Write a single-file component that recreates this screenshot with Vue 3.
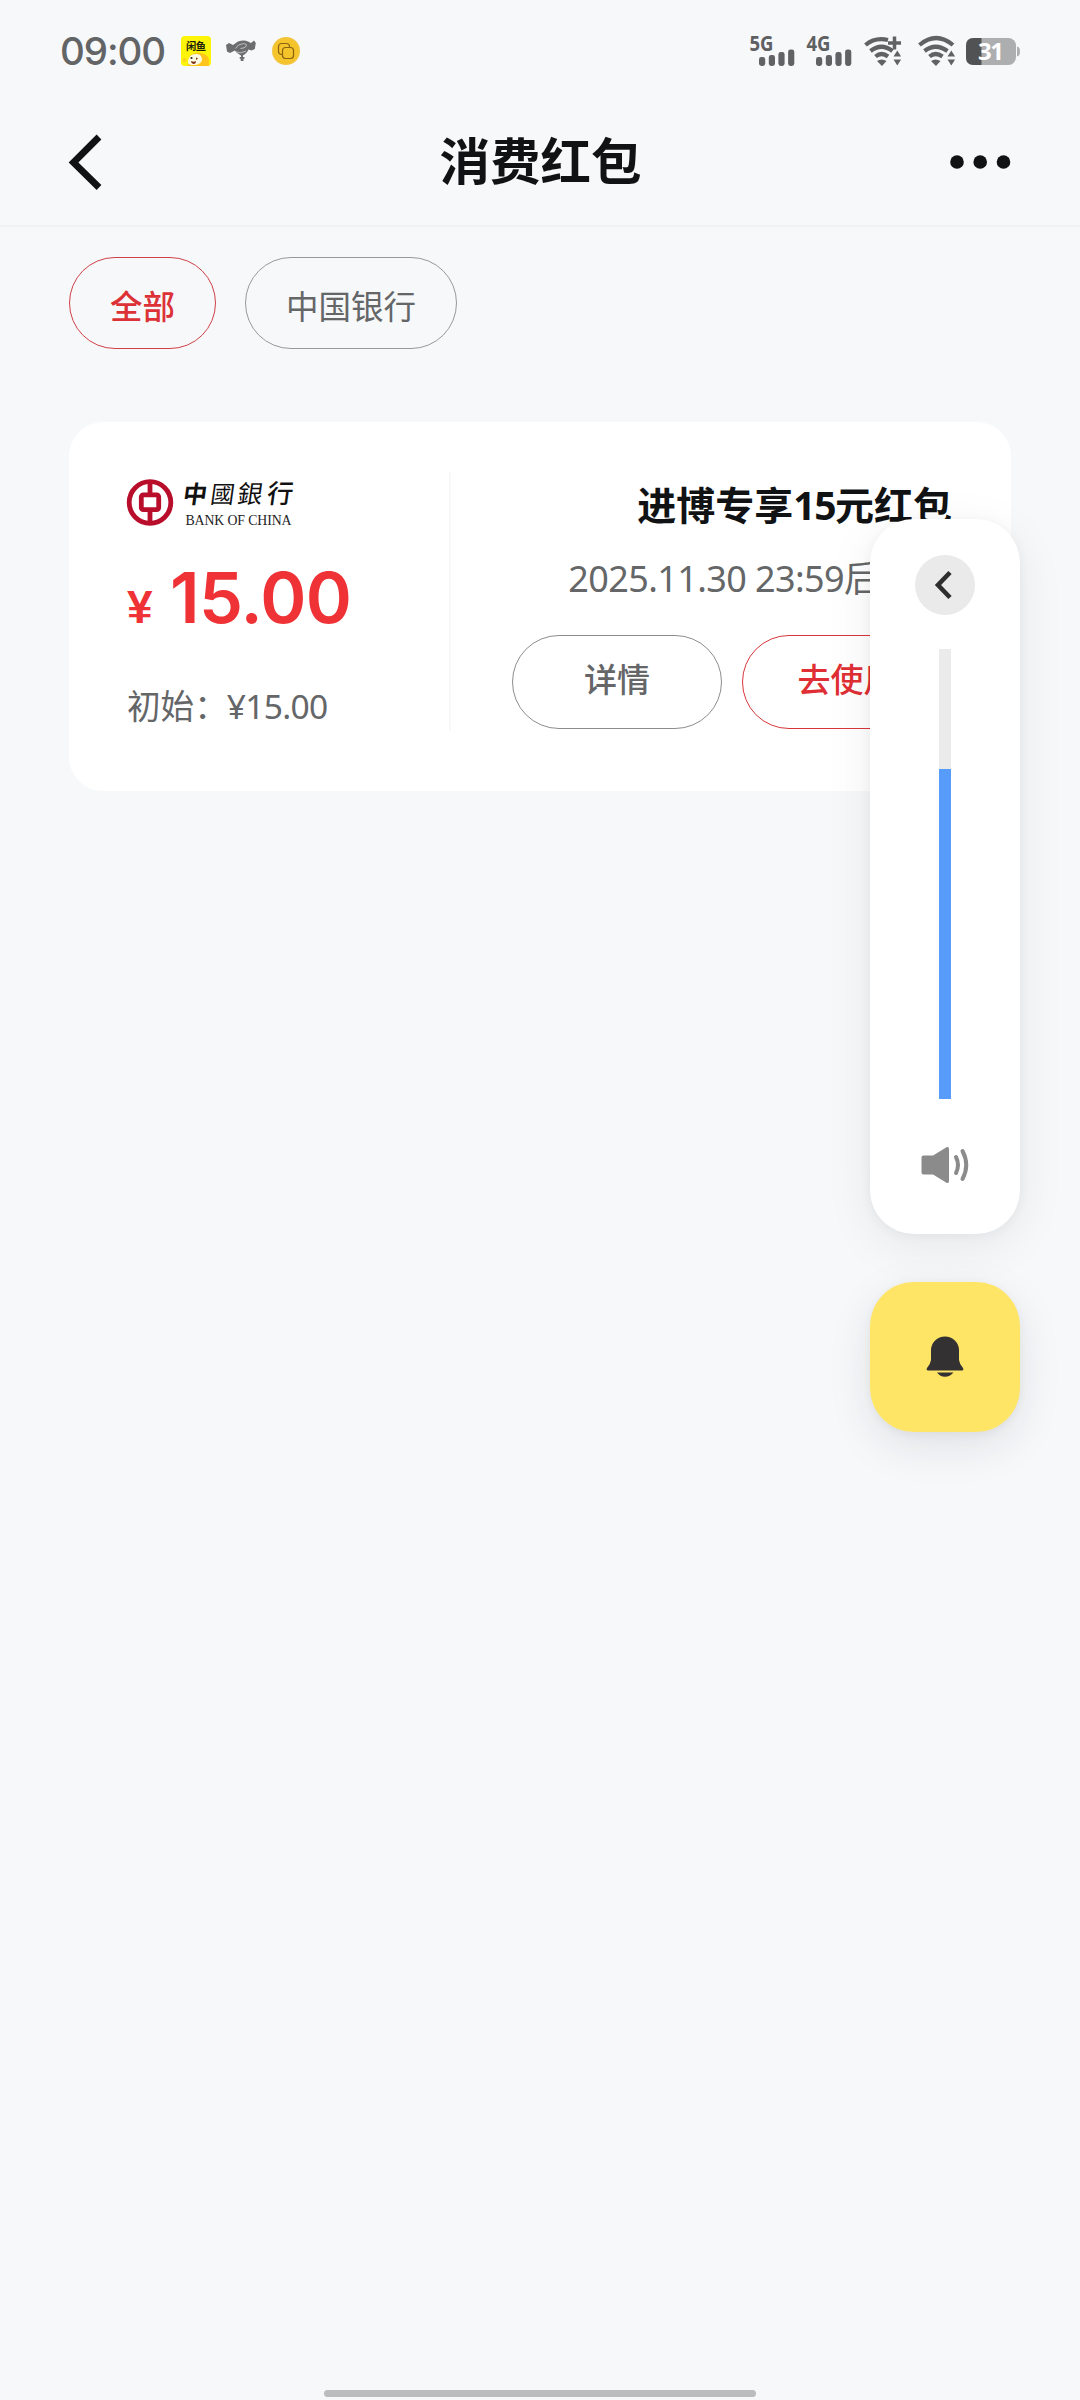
<script setup>
import { ref } from 'vue'

const chips = ref([
  { label: '全部', active: true },
  { label: '中国银行', active: false },
])
const volume = ref(73.33)
const bars = [
  { x: 9, h: 9 },
  { x: 18.8, h: 11 },
  { x: 28.4, h: 14 },
  { x: 38.1, h: 16.5 },
]
const networks = ['5G', '4G']
</script>

<template>
  <div class="screen">
    <div class="status">
      <span class="clock">09:00</span>
      <svg class="app-icon" width="30" height="30" viewBox="0 0 30 30">
        <rect width="30" height="30" rx="3.500" fill="#fdf509" />
        <path d="M7 30c-1-8 2-12 7-13 6-1 13 1 14 7v6z" fill="#ffc51b" />
        <path d="M7 27c0-6 3-9 8-9 4 0 6 2 6 6-1 4-5 5-8 5-3 0-5 0-6-2z" fill="#fffbe0" />
        <circle cx="3.500" cy="24" r="2" fill="#ffd21f" />
        <circle cx="10.500" cy="22" r="1.100" fill="#222" />
        <path d="M15 24l2-1.500-2-1M10 25q3 1.500 5 0 0 3-2.500 3-2.500-.5-2.500-3z" fill="#7a2a12" />
        <text x="5" y="13.500" font-size="10.300" font-weight="700" fill="#20200a" textLength="20">闲鱼</text>
      </svg>
      <svg class="bird-icon" width="30" height="22" viewBox="0 0 30 22">
        <path d="M0 5l3-2 4 2 5-3.500Q18-.3 22 1.500L25 3l3-2.500L29.800 3l-1 6-3.300 1.500-3-1q-1 3-4 5l-1.500.8L17 17h1.500v1.800h-1V21h-2.800v-2.200h-1V17h1.500l-.3-1.500q-4-2-6-5L4 13 1 11.500z" fill="#6b6d6f" />
        <path d="M9.500 8.500q2-4.500 8-5 4 .5 3 2.500-2 2.500-6 2.500M10 12q5 2 10-1" fill="none" stroke="#c4c6c8" stroke-width=".9" />
      </svg>
      <svg class="coin-icon" width="28" height="28" viewBox="0 0 28 28">
        <circle cx="14" cy="14" r="14" fill="#f2c53d" />
        <circle cx="14" cy="14" r="12.300" fill="#f5c42b" />
        <rect x="6.500" y="6.500" width="11" height="11" rx="3" fill="none" stroke="#8a6212" stroke-width="1.200" />
        <rect x="10.500" y="10.500" width="11" height="11" rx="3" fill="#f5c42b" stroke="#8a6212" stroke-width="1.200" />
      </svg>
      <div class="status-right">
        <svg v-for="n in networks" :key="n" class="signal" width="45" height="32" viewBox="0 0 45 32">
          <text x="-.5" y="16" font-size="20.500" font-weight="700" fill="#5e6062" textLength="24" lengthAdjust="spacingAndGlyphs">{{ n }}</text>
          <rect v-for="b in bars" :key="b.x" :x="b.x" :y="31 - b.h" width="6.200" :height="b.h" rx="2.400" fill="#606264" />
        </svg>
        <svg class="wifi" width="38" height="32" viewBox="0 0 38 32">
          <g fill="none" stroke="#606264" stroke-width="4.200">
            <path d="M1.500 10Q11 2 24 5" />
            <path d="M6.500 16Q17.500 7.500 28.500 16" />
            <path d="M11.500 21.500Q17.500 16.500 24 21.500" />
            <path d="M30.500 1.500v13M24 8h13" stroke-width="3.500" />
          </g>
          <path d="M13 26q4.500-3 9.500 0L18 31z M29.500 21.500l3.800-6 3.800 6z M29.500 24.500l3.800 6 3.800-6z" fill="#606264" />
        </svg>
        <svg class="wifi second" width="38" height="32" viewBox="0 0 38 32">
          <g fill="none" stroke="#606264" stroke-width="4.200">
            <path d="M1.500 10Q18-4 35 10" />
            <path d="M6.500 16Q17.500 7.500 29.500 16" />
            <path d="M11.500 21.500Q17.500 16.500 24.500 21.500" />
          </g>
          <path d="M13 26q4.500-3 9.500 0L18 31z M29.500 21.500l3.800-6 3.800 6z M29.500 24.500l3.800 6 3.800-6z" fill="#606264" />
        </svg>
        <svg class="battery" width="54" height="27" viewBox="0 0 54 27">
          <rect width="50" height="27" rx="7.500" fill="#acaeb0" />
          <path d="M51 8.500q3 .5 3 5t-3 5z" fill="#acaeb0" />
          <path d="M7.500 0H15.500V27H7.500Q0 27 0 19.500V7.500Q0 0 7.500 0z" fill="#505254" />
          <text x="12" y="22" font-size="24" font-weight="700" fill="#fff" textLength="26">31</text>
        </svg>
      </div>
    </div>

    <header class="nav">
      <svg width="34" height="56" viewBox="0 0 34 56">
        <path d="M31 3L5.500 28.500l25.500 25" fill="none" stroke="#111214" stroke-width="6.800" />
      </svg>
      <h1>消费红包</h1>
      <svg width="62" height="14" viewBox="0 0 62 14">
        <circle cx="8" cy="7" r="6.800" fill="#111214" />
        <circle cx="31.200" cy="7" r="6.800" fill="#111214" />
        <circle cx="54.500" cy="7" r="6.800" fill="#111214" />
      </svg>
    </header>

    <div class="chips">
      <div v-for="c in chips" :key="c.label" class="chip" :class="{ active: c.active }">{{ c.label }}</div>
    </div>

    <section class="card">
      <div class="left">
        <svg class="logo" width="170" height="48" viewBox="0 0 170 48">
          <circle cx="23" cy="24.500" r="20.800" fill="none" stroke="#b90e2b" stroke-width="4.800" />
          <path d="M23 3v12M23 34v12" stroke="#b90e2b" stroke-width="4.800" />
          <rect x="14.300" y="16.800" width="17.400" height="14.800" rx="2" fill="none" stroke="#b90e2b" stroke-width="4.800" />
          <g class="brush" fill="#111" transform="skewX(-8)">
            <text x="58.500" y="25" font-weight="700" font-size="24">中</text>
            <text x="86" y="24.500" font-size="24">國</text>
            <text x="113" y="25" font-size="25">銀</text>
            <text x="142.500" y="25" font-size="26" font-weight="500">行</text>
          </g>
          <text class="latin" x="58.500" y="47" font-size="13.800" fill="#222" textLength="106">BANK OF CHINA</text>
        </svg>
        <div class="price"><span class="yen">¥</span><span class="amount">15.00</span></div>
        <div class="initial">初始：<span>¥15.00</span></div>
      </div>
      <div class="right">
        <div class="name">进博专享<span>15</span>元红包</div>
        <div class="expiry"><span>2025.11.30 23:59</span>后过期</div>
        <div class="actions">
          <div class="btn">详情</div>
          <div class="btn primary">去使用</div>
        </div>
      </div>
    </section>

    <div class="volume">
      <div class="toggle">
        <svg width="20" height="30" viewBox="0 0 20 30">
          <path d="M16 2.500L4 15l12 12.500" fill="none" stroke="#2e2e2e" stroke-width="4.600" />
        </svg>
      </div>
      <div class="track"><div class="fill" :style="{ height: volume + '%' }"></div></div>
      <svg class="speaker" width="48" height="38" viewBox="0 0 48 38">
        <path d="M2.500 9.500H12L25.500 1.300Q28 .5 28 3V35q0 2.500-2.500 1.700L12 28.500H2.500Q.5 28.500.5 26.500V11.500Q.5 9.500 2.500 9.500z" fill="#8b8b8b" />
        <path d="M35 11q4 8 0 16M41.500 5q7.500 14 0 28" fill="none" stroke="#8b8b8b" stroke-width="4" stroke-linecap="round" />
      </svg>
    </div>

    <div class="bell">
      <svg width="38" height="42" viewBox="0 0 38 42">
        <path d="M5 15.500a14 14 0 0 1 28 0V25q.5 4 4 8 1 2.500-1 2.500H2q-2 0-1-2.500 3.500-4 4-8z" fill="#333132" />
        <path d="M11 37.500H27.500Q24 41.700 19 41.700T11 37.500z" fill="#333132" />
      </svg>
    </div>

    <div class="home-bar"></div>
  </div>
</template>

<style>
body {
  margin: 0;
  background: #f7f8fa;
}
</style>

<style scoped>
.screen {
  position: relative;
  width: 1080px;
  height: 2400px;
  overflow: hidden;
  box-sizing: border-box;
  background: #f7f8fa;
  font-family: "Noto Sans CJK SC", sans-serif;
  color: #111214;
}
svg {
  display: block;
  flex: none;
  overflow: visible;
}
.status {
  display: flex;
  align-items: center;
  height: 99px;
  padding: 3px 60px 0;
  box-sizing: border-box;
}
.clock {
  width: 121px;
  font: 500 38.5px/60px Inter, sans-serif;
  letter-spacing: -1.1px;
  color: #626466;
  white-space: nowrap;
}
.bird-icon { margin-left: 15px; }
.coin-icon { margin-left: 16px; }
.status-right {
  display: flex;
  align-items: center;
  margin-left: auto;
}
.signal {
  margin-right: 12px;
  font-family: "Noto Sans", sans-serif;
}
.wifi.second { margin-left: 16px; }
.battery {
  margin-left: 10px;
  font-family: "Noto Sans", sans-serif;
}
.nav {
  display: flex;
  align-items: center;
  justify-content: space-between;
  height: 126px;
  padding: 0 69px 0 68px;
  border-bottom: 2px solid #f0f1f3;
}
.nav h1 {
  margin: 0;
  padding: 0 0 8px 30px;
  font-size: 50.5px;
  line-height: 70px;
  font-weight: 700;
}
.chips {
  display: flex;
  gap: 29px;
  padding: 30px 69px 0;
}
.chip {
  height: 92px;
  padding: 2px 40px 0;
  border: 1px solid #97989a;
  border-radius: 46px;
  box-sizing: border-box;
  font-size: 32.5px;
  line-height: 90px;
  color: #646668;
}
.chip.active {
  border-color: #cf4146;
  font-weight: 500;
  color: #dc3237;
}
.card {
  display: flex;
  width: 942px;
  height: 369px;
  margin: 73px 69px 0;
  padding: 50px 59px 60px 58px;
  box-sizing: border-box;
  border-radius: 34px;
  background: #fff;
}
.left {
  width: 322px;
  border-right: 2px solid #f8f8f9;
}
.logo { margin-top: 6px; }
.brush { font-family: "Noto Sans CJK TC", sans-serif; }
.latin { font-family: "Liberation Serif", serif; }
.price {
  display: flex;
  align-items: baseline;
  height: 80px;
  margin-top: 32px;
  font-family: Inter, sans-serif;
  font-weight: 600;
  line-height: 80px;
  color: #ef3236;
}
.yen {
  width: 43px;
  font-family: "Liberation Sans", sans-serif;
  font-size: 46px;
  font-weight: 700;
}
.amount {
  font-size: 70px;
  letter-spacing: -0.7px;
}
.initial {
  margin-top: 42px;
  font-size: 33.6px;
  line-height: 50px;
  color: #646668;
  white-space: nowrap;
}
.initial span {
  margin-left: -1px;
  font-family: "Noto Sans", sans-serif;
  letter-spacing: -0.7px;
}
.right {
  flex: 1;
  display: flex;
  flex-direction: column;
  align-items: flex-end;
}
.name {
  margin-top: 4px;
  font-size: 39px;
  font-weight: 700;
  line-height: 54px;
}
.name span {
  font-family: "Noto Sans", sans-serif;
  letter-spacing: -1.5px;
}
.expiry {
  margin-top: 19px;
  font-size: 36px;
  line-height: 50px;
  color: #646668;
  white-space: nowrap;
}
.expiry span {
  font-family: "Noto Sans", sans-serif;
  letter-spacing: -0.6px;
}
.actions {
  display: flex;
  gap: 20px;
  margin-top: 31px;
}
.btn {
  width: 210px;
  height: 94px;
  padding-bottom: 8px;
  box-sizing: border-box;
  border: 1px solid #8c8d8f;
  border-radius: 47px;
  font-size: 33px;
  font-weight: 500;
  line-height: 85px;
  text-align: center;
  color: #646668;
}
.btn.primary {
  border-color: #d9363b;
  color: #df2f34;
}
.volume {
  position: absolute;
  left: 870px;
  top: 519px;
  display: flex;
  flex-direction: column;
  align-items: center;
  width: 150px;
  height: 715px;
  border-radius: 44px;
  background: #fff;
  box-shadow: 0 12px 50px rgba(20, 25, 35, 0.07), 0 2px 12px rgba(20, 25, 35, 0.05);
}
.toggle {
  display: flex;
  align-items: center;
  justify-content: center;
  width: 60px;
  height: 60px;
  margin-top: 36px;
  border-radius: 50%;
  background: #eaeaea;
}
.toggle svg { margin-right: 3px; }
.track {
  display: flex;
  align-items: flex-end;
  width: 12px;
  height: 450px;
  margin-top: 34px;
  background: #ebebeb;
}
.fill {
  width: 100%;
  background: #589cfb;
}
.speaker { margin-top: 47px; }
.bell {
  position: absolute;
  left: 870px;
  top: 1282px;
  display: flex;
  align-items: center;
  justify-content: center;
  width: 150px;
  height: 150px;
  padding-bottom: 2px;
  box-sizing: border-box;
  border-radius: 44px;
  background: #ffe566;
  box-shadow: 0 14px 44px rgba(20, 25, 35, 0.1), 0 2px 10px rgba(20, 25, 35, 0.05);
}
.home-bar {
  position: absolute;
  left: 324px;
  bottom: 3px;
  width: 432px;
  height: 7px;
  border-radius: 4px;
  background: #babcbe;
}
</style>
